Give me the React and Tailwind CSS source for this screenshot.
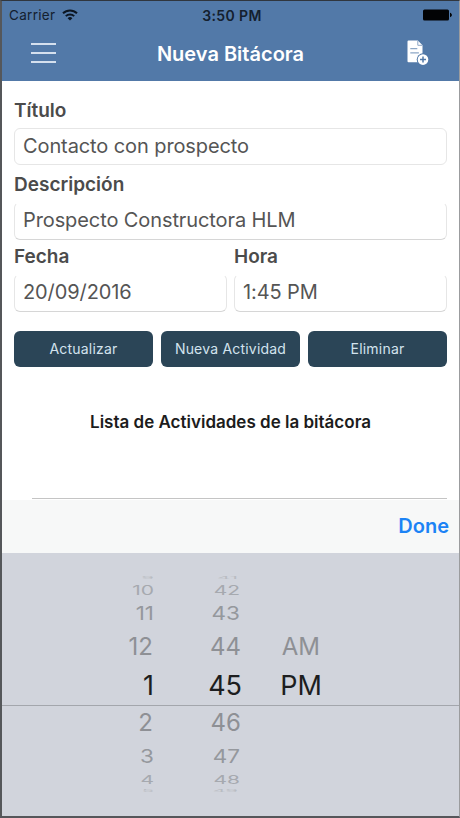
const HOURS = ['9', '10', '11', '12', '1', '2', '3', '4', '5'];
const MINUTES = ['41', '42', '43', '44', '45', '46', '47', '48', '49'];
const PERIODS = ['', '', '', 'AM', 'PM', '', '', '', ''];

// the rows get flatter and lighter as they roll away from the selected one
const ROWS = [
  { height: 'h-[8px] items-center', text: 'text-[20px] text-[#b9bcc2] scale-y-[0.18]' },
  { height: 'h-[16px] items-center', text: 'text-[21px] text-[#a6a9af] scale-y-[0.6]' },
  { height: 'h-[31px] items-center', text: 'text-[22.5px] text-[#95989d] scale-y-[0.84]' },
  { height: 'h-[36px] items-center', text: 'text-[24px] text-[#8e9095]' },
  { height: 'h-[41px] items-center', text: 'text-[27px] text-[#1d1e20]' },
  { height: 'h-[34px] items-center', text: 'text-[24px] text-[#8e9095]' },
  { height: 'h-[32px] items-center', text: 'text-[22.5px] text-[#95989d] scale-y-[0.84]' },
  { height: 'h-[15px] items-center', text: 'text-[21px] text-[#a6a9af] scale-y-[0.57]' },
  { height: 'h-[8px] items-center', text: 'text-[20px] text-[#b9bcc2] scale-y-[0.18]' },
];

// the wheel bulges outwards, so the far rows drift a little to the side
const HOUR_OFFSETS = ['pr-0', 'pr-0', 'pr-0', 'pr-px', 'pr-0', 'pr-px', 'pr-0', 'pr-0', 'pr-0'];
const MINUTE_OFFSETS = ['pr-[4px]', 'pr-[2px]', 'pr-[2px]', 'pr-px', 'pr-0', 'pr-px', 'pr-[2px]', 'pr-[2px]', 'pr-[4px]'];
const PERIOD_OFFSETS = ['', '', '', 'pr-[2px]', 'pr-0', '', '', '', ''];

function WheelColumn({ values, offsets, className }) {
  return (
    <div className={`flex flex-col ${className}`}>
      {values.map((value, i) => (
        <div key={i} className={`flex justify-end ${ROWS[i].height} ${offsets[i]}`}>
          <span className={`block leading-none ${ROWS[i].text}`}>{value}</span>
        </div>
      ))}
    </div>
  );
}

function StatusBar() {
  return (
    <div className="grid grid-cols-3 items-center h-[28px] pl-[7px] pr-[7px] text-[13.5px] text-[#14202f]">
      <div className="flex items-center gap-[7px]">
        <span className="tracking-[0.3px]">Carrier</span>
        <svg width="16" height="12" viewBox="0 0 16 12" fill="none" stroke="#0c1622" strokeWidth="2">
          <path d="M1 4.3a10 10 0 0 1 14 0" />
          <path d="M3.8 7.1a6 6 0 0 1 8.4 0" />
          <path d="M8 11.6 5.6 9.2a3.4 3.4 0 0 1 4.8 0z" fill="#0c1622" stroke="none" />
        </svg>
      </div>
      <span className="pl-[3px] text-center text-[14px] font-semibold tracking-[0.4px]">3:50 PM</span>
      <svg className="justify-self-end" width="29" height="12" viewBox="0 0 29 12" fill="#020305">
        <rect x="0" y="0.5" width="26" height="11" rx="1.5" />
        <path d="M27 3.8c1.2.4 1.9 1.2 1.9 2.2s-.7 1.8-1.9 2.2z" />
      </svg>
    </div>
  );
}

function Header() {
  return (
    <header className="h-[80px] bg-[#5279a8]">
      <StatusBar />
      <div className="flex items-start justify-between h-[52px] pl-[29px] pr-[30px]">
        <button type="button" className="flex flex-col gap-[7px] pt-[14px]">
          <span className="block w-[25px] h-[2px] bg-[#d5e0ee]" />
          <span className="block w-[25px] h-[2px] bg-[#d5e0ee]" />
          <span className="block w-[25px] h-[2px] bg-[#d5e0ee]" />
        </button>
        <h1 className="pt-[10px] pr-[2px] leading-[30px] text-[20px] font-semibold text-white">Nueva Bitácora</h1>
        <button type="button" className="pt-[11px]">
          <svg width="22" height="26" viewBox="0 0 22 26">
            <path d="M1.5.6h9.3l4.7 4.7V22.3H1.5a1 1 0 0 1-1-1V1.6a1 1 0 0 1 1-1z" fill="#fff" />
            <path d="M10.8.8v4.5h4.5" fill="none" stroke="#8ca6c6" strokeWidth="1" />
            <path d="M3.3 8.6h7M3.3 12.9h8.6" stroke="#8ca6c6" strokeWidth="1.4" />
            <circle cx="16" cy="19.6" r="6.3" fill="#5279a8" />
            <circle cx="16" cy="19.6" r="5.3" fill="#fff" />
            <path d="M16 16.6v6M13 19.6h6" stroke="#5279a8" strokeWidth="1.5" />
          </svg>
        </button>
      </div>
    </header>
  );
}

function Field({ label, value, open, className }) {
  return (
    <div className={className}>
      <label className="block h-[22px] leading-[22px] text-[19px] font-semibold text-[#4b4b4b]">{label}</label>
      <div
        className={`flex items-center pl-[8px] rounded-[6px] border border-[#e6e6e6] text-[20px] tracking-[-0.1px] text-[#555] ${
          open ? 'h-[38px] mt-[6px] pb-[3px] border-t-transparent border-b-[#d6d6d6]' : 'h-[37px] mt-[6px] pb-[2px]'
        }`}
      >
        {value}
      </div>
    </div>
  );
}

function ActionButton({ children }) {
  return (
    <button
      type="button"
      className="flex-1 h-[36px] pb-[1px] rounded-[6px] bg-[#2b4557] text-[14px] text-[#d3e3ee] tracking-[0.2px]"
    >
      {children}
    </button>
  );
}

export default function App() {
  return (
    <div className="flex flex-col w-[460px] h-[818px] overflow-hidden bg-white border-t border-l-2 border-r border-b-2 border-t-[#30363e] border-l-[#55575a] border-r-[#9b9c9e] border-b-[#55565a] font-['Inter','Liberation_Sans',sans-serif]">
      <Header />

      <main className="h-[419px] pl-[12px] pr-[12px] pt-[19px]">
        <Field label="Título" value="Contacto con prospecto" />
        <Field label="Descripción" value="Prospecto Constructora HLM" open className="mt-[9px]" />
        <div className="flex gap-[7px] mt-[6px]">
          <Field label="Fecha" value="20/09/2016" open className="flex-1" />
          <Field label="Hora" value="1:45 PM" open className="flex-1" />
        </div>
        <div className="flex gap-[8px] mt-[19px]">
          <ActionButton>Actualizar</ActionButton>
          <ActionButton>Nueva Actividad</ActionButton>
          <ActionButton>Eliminar</ActionButton>
        </div>
        <h2 className="h-[20px] mt-[45px] leading-[20px] text-center text-[17px] font-semibold text-[#1c1c1c]">
          Lista de Actividades de la bitácora
        </h2>
        <div className="mt-[66px] ml-[18px] h-px bg-[#c4c4c4]" />
      </main>

      <div className="flex items-center justify-end h-[53px] pr-[10px] pb-[1px] bg-[#f7f8f8]">
        <button type="button" className="text-[20px] font-semibold text-[#1c83f5]">Done</button>
      </div>

      <div className="relative flex-1 flex pt-[21px] bg-[#d1d4dc]">
        <WheelColumn values={HOURS} offsets={HOUR_OFFSETS} className="w-[152px]" />
        <WheelColumn values={MINUTES} offsets={MINUTE_OFFSETS} className="w-[88px]" />
        <WheelColumn values={PERIODS} offsets={PERIOD_OFFSETS} className="w-[80px]" />
        <div className="absolute inset-x-0 top-[152px] h-px bg-[#a3a6ac]" />
      </div>
    </div>
  );
}
